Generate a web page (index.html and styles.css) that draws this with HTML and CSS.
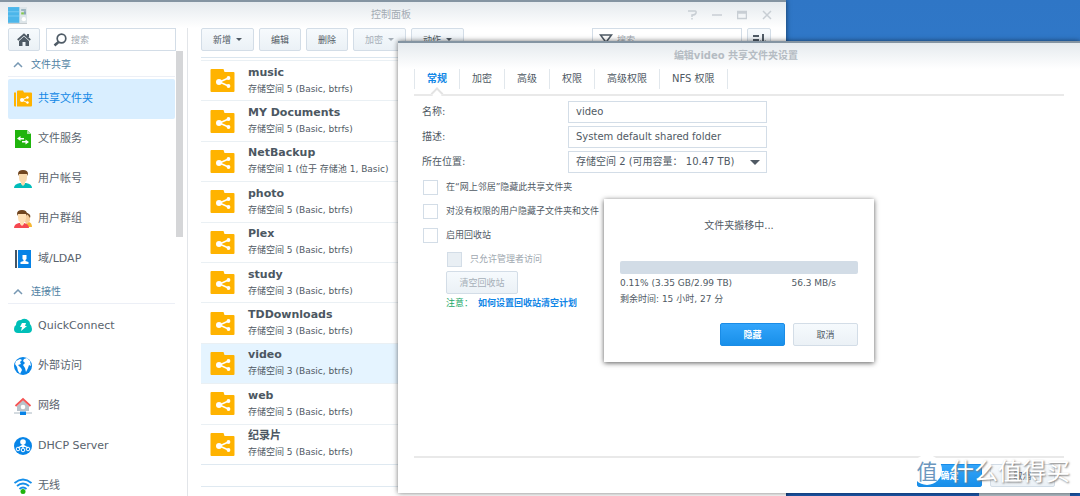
FILE: index.html
```html
<!DOCTYPE html>
<html lang="zh-CN">
<head>
<meta charset="utf-8">
<title>控制面板</title>
<link rel="stylesheet" href="styles.css">
</head>
<body>
<svg class="defs" width="0" height="0" aria-hidden="true">
  <symbol id="folder" viewBox="0 0 24 23">
    <path fill="#ffb300" d="M1 0h12l1 3h9q1 0 1 1v18q0 1-1 1H1q-1 0-1-1V1q0-1 1-1z"/>
    <path stroke="#fff" stroke-width="1.600" fill="none" d="M18 9L9 13l9 4"/>
    <circle cx="8.500" cy="13" r="3" fill="#fff"/><circle cx="18" cy="9" r="1.900" fill="#fff"/><circle cx="18" cy="17" r="1.900" fill="#fff"/>
  </symbol>
</svg>
<main class="desktop">
  <div class="desktop-dock"></div>
  <section class="window panel">
    <header class="titlebar">
      <svg class="app-icon" viewBox="0 0 18 16"><rect width="11" height="15" fill="#4cb6ea"/><path stroke="#78caf2" d="M0 4.500h11M0 8.500h11"/><path fill="#dce5e9" d="M11 0h7v15h-7z"/><path fill="#87a6b5" d="M12.500 2H17v1.500h-4.500zM15 4h2v3h-2z"/><path fill="#84c94e" d="M12.500 5H15v2h-2.500z"/><circle cx="15" cy="11.500" r="2" fill="#fff"/><path fill="#c3c9cd" d="M0 15h18v1H0z"/></svg>
      <h1 class="title">控制面板</h1>
      <div class="window-controls">
        <button aria-label="帮助"><svg viewBox="0 0 10 10"><path d="M1 1h7q1.500 0 1 2T5 5v2M5 8v1.500"/></svg></button>
        <button aria-label="最小化"><svg viewBox="0 0 10 10"><path d="M0 5h10"/></svg></button>
        <button aria-label="最大化"><svg viewBox="0 0 10 10"><path d="M.5 1.500h9v7h-9zM1 3h8"/></svg></button>
        <button aria-label="关闭"><svg viewBox="0 0 10 10"><path d="M1 1l8 8M9 1L1 9"/></svg></button>
      </div>
    </header>
    <div class="panel-body">
      <aside class="sidebar">
        <div class="side-tools">
          <button class="btn home" aria-label="主页"><svg viewBox="0 0 14 14"><path fill="#4f5b66" d="M7 3.500l5 4.500v5H8.500V9h-3v4H2V8z"/><path fill="none" stroke="#4f5b66" stroke-width="1.700" d="M.7 7L7 1.500 13.300 7"/><path fill="#4f5b66" d="M10 1h2v3h-2z"/></svg></button>
          <label class="search"><svg viewBox="0 0 14 14"><circle cx="8.500" cy="5.500" r="4.300" fill="none" stroke="#4f5b66" stroke-width="1.700"/><path stroke="#4f5b66" stroke-width="2.500" d="M5.500 9L1.500 12.500"/></svg><input type="text" placeholder="搜索" aria-label="搜索设置"></label>
        </div>
        <div class="side-scroll">
          <nav class="side-nav">
            <button class="group"><svg viewBox="0 0 10 6"><path d="M1 5l4-4 4 4"/></svg>文件共享</button>
            <div class="items">
              <a class="item active" href="#share"><svg viewBox="0 0 18 17"><path fill="#ffb300" d="M0 2h2v14H1q-1 0-1-1zM3 1q0-1 1-1h5l1 2h7q1 0 1 1v12q0 1-1 1H3z"/><path fill="none" stroke="#fff" d="M14 6.500L8 9.500l6 3"/><circle cx="8" cy="9.500" r="2" fill="#fff"/><circle cx="13.500" cy="7" r="1.200" fill="#fff"/><circle cx="13.500" cy="12" r="1.200" fill="#fff"/></svg>共享文件夹</a>
              <a class="item" href="#service"><svg viewBox="0 0 18 18"><path fill="#20b40d" d="M1 0h12l4 4v14H1z"/><path fill="#a9e4a1" d="M13 0l4 4h-4z"/><path fill="#fff" d="M3 8.500L6.500 6v2H10v1.500H6.500V11zM15 12l-3.500 2.500v-2H8V11h3.500V9.500z"/></svg>文件服务</a>
              <a class="item" href="#user"><svg viewBox="0 0 18 18"><path fill="#00bcb9" d="M0 18q0-4 6-5h6q6 1 6 5z"/><path fill="#f7d9ad" d="M5 3h8v5q0 3-2 4v2l-2 2-2-2v-2Q5 11 5 8z"/><path fill="#70451f" d="M4 6V4q0-4 5-4t5 4v2l-1-2q-4 0-8 0z"/></svg>用户帐号</a>
              <a class="item" href="#group"><svg viewBox="0 0 18 18"><path fill="#f7b733" d="M12 13l3-1q3 1 3 5h-4z"/><path fill="#f6cd9c" d="M10 5h6v6l-3 3-3-3z"/><path fill="#70451f" d="M9 3q4-1 6 1 2 1 1 4l-2-3z"/><path fill="#f54850" d="M0 18q0-4 5-5h5q5 1 5 5z"/><path fill="#ffe0b5" d="M4 3h8v5q0 3-2 4v2l-2 2-2-2v-2Q4 11 4 8z"/><path fill="#70451f" d="M3 6V4q0-4 5-4t5 4v2l-1-2q-4 0-8 0z"/></svg>用户群组</a>
              <a class="item" href="#ldap"><svg viewBox="0 0 18 18"><path fill="#455564" d="M1 0h2v18H1z"/><path fill="#0783e6" d="M4 0h13v18H4z"/><path fill="#fff" d="M8.500 5h4v4l-1 1v1l3 1v2h-8v-2l3-1v-1l-1-1z"/></svg>域/LDAP</a>
            </div>
            <button class="group"><svg viewBox="0 0 10 6"><path d="M1 5l4-4 4 4"/></svg>连接性</button>
            <div class="items">
              <a class="item" href="#quick"><svg viewBox="0 0 18 18"><path fill="#00bfb8" d="M4 16q-4 0-4-4 0-3 2-4 0-5 5-5 4-3 8 1 1 1 1 3 2 2 2 5 0 4-4 4z"/><path fill="#fff" d="M8 6h4l-1 3h2l-6 5 1-4H6z"/></svg>QuickConnect</a>
              <a class="item" href="#external"><svg viewBox="0 0 18 18"><circle cx="9" cy="9" r="9" fill="#0785e8"/><path fill="#fff" d="M2 4l4-2 2 1-2 2 1 2-3 1 3 3 1 2-2 4-2-3-1-4-2-3zM10 2l3-1 3 3 1 5-2-1-1 3-2 4-1-4-2-3 2-2-2-2z"/></svg>外部访问</a>
              <a class="item" href="#network"><svg viewBox="0 0 18 18"><path fill="#b9c2ca" d="M3 9l6-6 6 6v5H3z"/><circle cx="9" cy="10" r="2.300" fill="#fff"/><path fill="none" stroke="#f55454" stroke-width="1.800" d="M1.500 9L9 2l7.500 7"/><path stroke="#aab8c2" d="M0 16h18"/><path fill="#0783e6" d="M6 14.500h6V18H6z"/></svg>网络</a>
              <a class="item" href="#dhcp"><svg viewBox="0 0 18 18"><circle cx="9" cy="9" r="9" fill="#0785e8"/><circle cx="9" cy="5" r="2.800" fill="#fff"/><path fill="none" stroke="#fff" stroke-width="1.200" d="M9 7v4M9 8l-5 3M9 8l5 3"/><g fill="none" stroke="#fff"><circle cx="4" cy="12" r="1.800"/><circle cx="9" cy="13" r="1.800"/><circle cx="14" cy="12" r="1.800"/></g></svg>DHCP Server</a>
              <a class="item" href="#wifi"><svg viewBox="0 0 18 18"><g fill="none" stroke="#168fea" stroke-width="1.900"><path d="M.5 6q8.500-7 17 0M3 9q6-5 12 0M5.500 12q3.500-3 7 0"/></g><circle cx="9" cy="14.500" r="2.500" fill="#20b40d"/></svg>无线</a>
            </div>
          </nav>
          <div class="scroll-thumb"></div>
        </div>
      </aside>
      <div class="content">
        <div class="toolbar">
          <button class="btn menu">新增<i class="caret"></i></button>
          <button class="btn">编辑</button>
          <button class="btn">删除</button>
          <button class="btn menu" disabled>加密<i class="caret"></i></button>
          <button class="btn menu">动作<i class="caret"></i></button>
          <label class="search filter"><svg viewBox="0 0 14 14"><path fill="none" stroke="#4f5b66" stroke-width="1.600" d="M1.500 2h11L8 8v4L6 10V8z"/></svg><input type="text" placeholder="搜索" aria-label="筛选文件夹"></label>
          <button class="btn sort" aria-label="排序"><svg viewBox="0 0 14 14"><path fill="none" stroke="#4f5b66" stroke-width="2" d="M1 3h6M1 7h6M11 1v9M8 8l3 3 3-3"/></svg></button>
        </div>
        <ul class="folders">
          <li><svg><use href="#folder"/></svg><div><b>music</b><p>存储空间 5 (Basic, btrfs)</p></div></li>
          <li><svg><use href="#folder"/></svg><div><b>MY Documents</b><p>存储空间 5 (Basic, btrfs)</p></div></li>
          <li><svg><use href="#folder"/></svg><div><b>NetBackup</b><p>存储空间 1 (位于 存储池 1, Basic)</p></div></li>
          <li><svg><use href="#folder"/></svg><div><b>photo</b><p>存储空间 5 (Basic, btrfs)</p></div></li>
          <li><svg><use href="#folder"/></svg><div><b>Plex</b><p>存储空间 5 (Basic, btrfs)</p></div></li>
          <li><svg><use href="#folder"/></svg><div><b>study</b><p>存储空间 3 (Basic, btrfs)</p></div></li>
          <li><svg><use href="#folder"/></svg><div><b>TDDownloads</b><p>存储空间 3 (Basic, btrfs)</p></div></li>
          <li class="selected"><svg><use href="#folder"/></svg><div><b>video</b><p>存储空间 3 (Basic, btrfs)</p></div></li>
          <li><svg><use href="#folder"/></svg><div><b>web</b><p>存储空间 5 (Basic, btrfs)</p></div></li>
          <li><svg><use href="#folder"/></svg><div><b>纪录片</b><p>存储空间 5 (Basic, btrfs)</p></div></li>
        </ul>
        <div class="statusbar"></div>
      </div>
    </div>
  </section>

  <section class="window editor">
    <header class="titlebar"><h2 class="title strong">编辑video 共享文件夹设置</h2></header>
    <div class="tabs" role="tablist">
      <button class="tab current" role="tab" aria-selected="true">常规</button>
      <button class="tab" role="tab">加密</button>
      <button class="tab" role="tab">高级</button>
      <button class="tab" role="tab">权限</button>
      <button class="tab" role="tab">高级权限</button>
      <button class="tab" role="tab">NFS 权限</button>
    </div>
    <form class="form">
      <div class="field"><label for="name">名称:</label><input id="name" type="text" value="video"></div>
      <div class="field"><label for="desc">描述:</label><input id="desc" type="text" value="System default shared folder"></div>
      <div class="field"><label for="place">所在位置:</label><span class="select"><select id="place"><option>存储空间 2 (可用容量： 10.47 TB)</option></select></span></div>
      <div class="checks">
        <label class="check"><input type="checkbox">在“网上邻居”隐藏此共享文件夹</label>
        <label class="check"><input type="checkbox">对没有权限的用户隐藏子文件夹和文件</label>
        <label class="check"><input type="checkbox">启用回收站</label>
        <label class="check nested"><input type="checkbox" disabled>只允许管理者访问</label>
      </div>
      <button class="btn recycle" type="button" disabled>清空回收站</button>
      <p class="note">注意： <a href="#plan">如何设置回收站清空计划</a></p>
    </form>
    <footer class="actions">
      <button class="btn primary">确定</button>
      <button class="btn">取消</button>
    </footer>
  </section>

  <section class="dialog" role="dialog" aria-label="文件夹搬移中">
    <p class="message">文件夹搬移中...</p>
    <div class="progress" role="progressbar" aria-valuenow="0.11" aria-valuemin="0" aria-valuemax="100"></div>
    <div class="stats"><span>0.11% (3.35 GB/2.99 TB)</span><span>56.3 MB/s</span></div>
    <p class="remaining">剩余时间: 15 小时, 27 分</p>
    <div class="dialog-actions">
      <button class="btn primary">隐藏</button>
      <button class="btn">取消</button>
    </div>
  </section>

  <div class="watermark"><span class="mark">值</span><span>什么值得买</span></div>
</main>
</body>
</html>
```
FILE: styles.css
```css
* { box-sizing: border-box; }
body {
  margin: 0;
  color: #505a64;
  font: 9px/16px "DejaVu Sans", "Noto Sans CJK SC", sans-serif;
}
button, input, select { font: inherit; color: inherit; margin: 0; }
button { cursor: pointer; }
p, h1, h2, ul { margin: 0; padding: 0; }
.defs { position: absolute; }
.desktop {
  position: relative;
  height: 100vh;
  overflow: hidden;
  background: linear-gradient(#2f76c6, #3079c9 20%, #1c58ad 90%);
}
.desktop-dock { position: absolute; right: 10px; bottom: 0; width: 91px; height: 20px; background: #b4c0ca; }
.window {
  position: absolute;
  display: flex;
  flex-direction: column;
  background: #fff;
  border-top: 2px solid #8494a2;
  box-shadow: 0 0 5px rgba(0, 0, 0, .55);
}
.panel { left: 0; top: 0; width: 786px; bottom: -30px; }
.titlebar {
  display: flex;
  align-items: center;
  height: 26px;
  padding: 0 14px 0 8px;
  background: linear-gradient(#e5eaee, #fff);
}
.app-icon { width: 19px; height: 17px; }
.title {
  flex: 1;
  text-align: center;
  color: #a3abb3;
  font-size: 10px;
  font-weight: 400;
}
.title.strong { font-weight: 700; color: #b5bcc3; }
.window-controls { display: flex; gap: 15px; }
.window-controls button { display: flex; padding: 0; border: 0; background: none; }
.window-controls svg { width: 10px; height: 10px; fill: none; stroke: #c8ced4; stroke-width: 1.5; }
.panel .title { padding-left: 68px; }
.panel-body { display: flex; flex: 1; }

.sidebar { width: 188px; padding-left: 8px; border-right: 1px solid #e2e5e9; }
.side-tools { display: flex; gap: 6px; padding-right: 11px; }
.btn {
  display: inline-flex;
  align-items: center;
  justify-content: center;
  height: 23px;
  min-width: 42px;
  padding: 0;
  border: 1px solid #d3dde7;
  border-radius: 2px;
  background: linear-gradient(#f6fafd, #ebf1f6);
}
.btn:disabled { color: #a6afb8; }
.btn.menu { min-width: 53px; gap: 5px; }
.btn.primary { border-color: #1a8ce6; background: linear-gradient(#33a5fb, #188fe9); color: #fff; font-weight: 700; }
.btn.home { min-width: 32px; }
.btn svg { width: 14px; height: 14px; }
.caret { border: 3px solid transparent; border-top-color: currentColor; border-bottom: 0; }
.search {
  display: flex;
  align-items: center;
  flex: 1;
  gap: 4px;
  height: 23px;
  padding: 0 6px;
  border: 1px solid #d3dde7;
  background: #fff;
}
.search svg { width: 14px; height: 14px; flex: none; }
.search input { min-width: 0; width: 100%; padding: 0; border: 0; outline: 0; background: none; }
.search input::placeholder { color: #a0a8b0; }
.side-scroll { display: flex; gap: 1px; align-items: flex-start; }
.side-nav { width: 167px; }
.group {
  display: flex;
  align-items: center;
  gap: 8px;
  width: 100%;
  height: 26px;
  margin-bottom: 2px;
  padding: 2px 5px 0;
  border: 0;
  border-bottom: 1px solid #eceff6;
  background: none;
  color: #4f7fa3;
  font-size: 10px;
}
.group svg { width: 10px; height: 6px; fill: none; stroke: #7798b3; stroke-width: 1.5; }
.items { display: grid; grid-auto-rows: 1fr; height: 199px; }
.item {
  display: flex;
  align-items: center;
  gap: 6px;
  padding: 1px 0 0 6px;
  border-radius: 2px;
  color: #59636d;
  font-size: 11px;
  text-decoration: none;
}
.item svg { width: 18px; height: 18px; }
.item.active { background: #d9eeff; color: #1187e6; }
.scroll-thumb { width: 7px; height: 186px; background: #d5d6d8; }

.content { flex: 1; padding: 0 15px 0 13px; }
.toolbar { display: flex; gap: 5px; height: 30px; border-bottom: 1px solid #dbe6ef; }
.filter { flex: none; width: 150px; margin-left: auto; }
.btn.sort { min-width: 24px; }
.folders {
  display: grid;
  grid-auto-rows: 1fr;
  height: 407px;
  padding-top: 2px;
  border-bottom: 1px solid #dfe9f1;
  list-style: none;
}
.folders li { display: flex; align-items: center; gap: 13px; padding-left: 9px; border-top: 1px solid #eaf0f4; }
.folders svg { width: 25px; height: 23px; }
.folders b { display: block; font-size: 11px; color: #4c5762; }
.folders .selected { background: #e5f4ff; }
.statusbar { height: 22px; border-bottom: 1px solid #dfe9f1; }

.editor { left: 398px; right: 0; top: 41px; bottom: 3px; }
.tabs {
  display: flex;
  height: 27px;
  margin: 0 16px;
  border-bottom: 2px solid #e9e9e9;
}
.tab {
  position: relative;
  height: 20px;
  padding: 0 12px;
  border: 0;
  border-right: 1px solid #e1e7ec;
  background: none;
  font-size: 10px;
}
.tab:first-child { border-left: 1px solid #e1e7ec; }
.tab.current { color: #1187e6; font-weight: 700; }
.tab.current::after {
  content: "";
  position: absolute;
  left: 50%;
  bottom: -9px;
  width: 7px;
  height: 7px;
  border: solid #e3e3e3;
  border-width: 2px 0 0 2px;
  background: #fff;
  transform: translateX(-50%) rotate(45deg);
}
.form { flex: 1; padding: 4px 24px; }
.field { display: flex; align-items: center; height: 23px; margin-bottom: 2px; font-size: 10px; }
.field > label { width: 146px; }
.field input, .select { width: 199px; height: 22px; border: 1px solid #d3dde7; background: #fff; }
.field input { padding: 0 7px; }
.select { position: relative; display: block; }
.select::after {
  content: "";
  position: absolute;
  right: 6px;
  top: 8px;
  border: 5px solid transparent;
  border-top-color: #505a64;
  border-bottom: 0;
  pointer-events: none;
}
.select select { width: 100%; height: 20px; padding: 0 7px; border: 0; background: none; appearance: none; }
.check { display: flex; align-items: center; gap: 8px; height: 24px; padding-left: 1px; }
.check input { appearance: none; width: 15px; height: 15px; border: 1px solid #d3dde7; background: #fff; }
.check input:disabled { background: #e9eff4; }
.nested { padding-left: 25px; color: #a0a8b0; }
.recycle { min-width: 72px; margin: 0 24px; }
.note { padding: 1px 24px; color: #1ba968; }
.note a { margin-left: 2px; color: #0f85e6; font-weight: 700; text-decoration: none; }
.actions { display: flex; justify-content: flex-end; gap: 8px; margin: 0 16px; padding: 6px 9px 6px; border-top: 2px solid #e9e9e9; }
.actions .btn, .dialog-actions .btn { min-width: 65px; }

.dialog {
  position: absolute;
  left: 604px;
  top: 199px;
  width: 270px;
  padding: 19px 16px 16px;
  background: #fff;
  box-shadow: 0 1px 5px rgba(0, 0, 0, .65);
}
.message { text-align: center; font-size: 10px; }
.progress { height: 13px; margin: 27px 0 1px; border-radius: 2px; background: #d2dce6; }
.stats { display: flex; justify-content: space-between; padding-right: 22px; }
.dialog-actions { display: flex; justify-content: flex-end; gap: 8px; margin-top: 16px; }

.watermark {
  position: absolute;
  right: 10px;
  bottom: 11px;
  display: flex;
  align-items: center;
  gap: 8px;
  color: #fff;
  font: 24px/30px "Noto Sans CJK SC", sans-serif;
  text-shadow: 1px 1px 2px #777;
  pointer-events: none;
}
.mark {
  width: 30px;
  height: 30px;
  border-radius: 50%;
  background: #fff;
  color: #6b96bd;
  font-size: 21px;
  text-align: center;
  text-shadow: none;
}
```
